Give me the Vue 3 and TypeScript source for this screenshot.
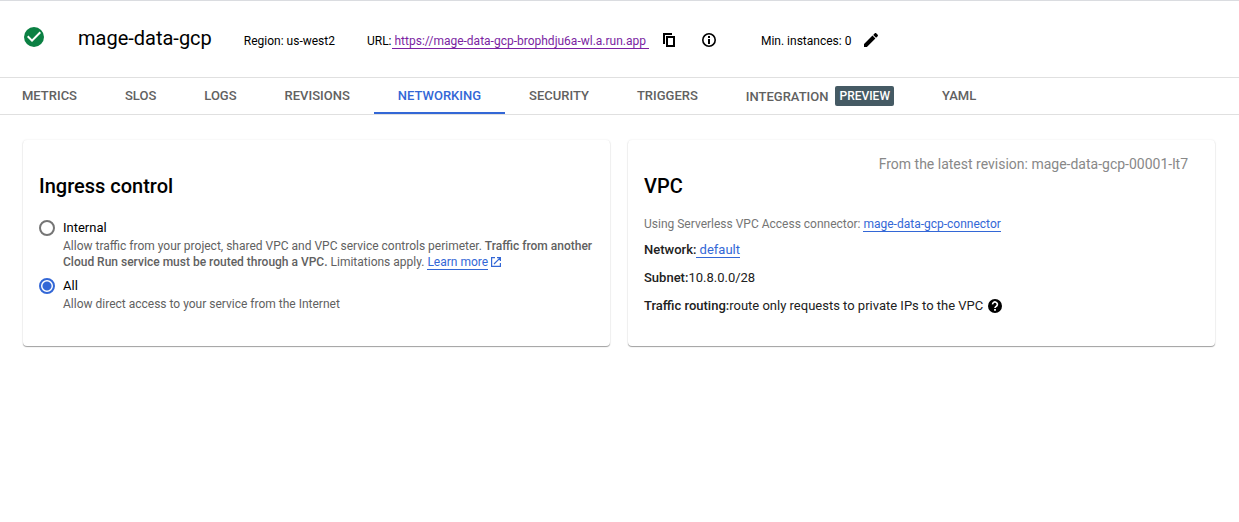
<script setup lang="ts">
import { ref } from 'vue'

interface Tab {
  label: string
  badge?: string
}

const tabs: Tab[] = [
  { label: 'METRICS' },
  { label: 'SLOS' },
  { label: 'LOGS' },
  { label: 'REVISIONS' },
  { label: 'NETWORKING' },
  { label: 'SECURITY' },
  { label: 'TRIGGERS' },
  { label: 'INTEGRATION', badge: 'PREVIEW' },
  { label: 'YAML' },
]

const activeTab = ref('NETWORKING')
const ingress = ref('all')
</script>

<template>
  <div class="page">
    <header class="service">
      <svg class="status" viewBox="0 0 24 24" role="img" aria-label="Healthy">
        <path fill="#0b8043" d="M12 2a10 10 0 1 0 0 20 10 10 0 0 0 0-20z" />
        <path fill="#fff" d="M10 17l-5-5 1.41-1.41L10 14.17l7.59-7.59L19 8z" />
      </svg>
      <h1>mage-data-gcp</h1>
      <span class="region">Region: us-west2</span>
      <span class="url">URL:<a href="#" class="visited">&nbsp;https://mage-data-gcp-brophdju6a-wl.a.run.app&nbsp;</a></span>
      <button type="button" class="icon-button copy" aria-label="Copy URL">
        <svg viewBox="0 0 18 18">
          <path fill="none" stroke="currentColor" stroke-width="2" d="M4 13V3h8M7 6h7v9H7z" />
        </svg>
      </button>
      <button type="button" class="icon-button info" aria-label="URL information">
        <svg viewBox="0 0 18 18">
          <circle cx="9" cy="9" r="6.2" fill="none" stroke="currentColor" stroke-width="1.6" />
          <path fill="currentColor" d="M8 8h2v5H8zM8 5h2v2H8z" />
        </svg>
      </button>
      <span class="instances">Min. instances: 0</span>
      <button type="button" class="icon-button edit" aria-label="Edit minimum instances">
        <svg viewBox="0 0 18 18">
          <path fill="currentColor" d="M2 13.1V16h2.9l8.5-8.500L10.500 4.600zM15.700 5.200c.4-.4.4-1 0-1.400l-1.500-1.500c-.4-.4-1-.4-1.400 0L11.200 3.900l2.900 2.900z" />
        </svg>
      </button>
    </header>

    <nav class="tabs" aria-label="Service sections">
      <button
        v-for="tab in tabs"
        :key="tab.label"
        type="button"
        class="tab"
        :class="{ active: tab.label === activeTab, badged: tab.badge }"
        @click="activeTab = tab.label"
      >
        {{ tab.label }}<span v-if="tab.badge" class="badge">{{ tab.badge }}</span>
      </button>
    </nav>

    <main class="cards">
      <section class="card">
        <h2>Ingress control</h2>
        <div class="option">
          <input id="internal" v-model="ingress" type="radio" name="ingress" value="internal" />
          <div>
            <label for="internal">Internal</label>
            <p>
              Allow traffic from your project, shared VPC and VPC service controls perimeter.
              <b>Traffic from another Cloud Run service must be routed through a VPC.</b>
              Limitations apply.
              <a href="#" class="link">Learn more</a>
              <svg class="external" viewBox="0 0 12 12" aria-hidden="true">
                <path fill="none" stroke="currentColor" stroke-width="1.2" d="M5 1.6H1.6v8.8h8.8V7M7 1.6h3.4V5M10.2 1.8L4 8" />
              </svg>
            </p>
          </div>
        </div>
        <div class="option">
          <input id="all" v-model="ingress" type="radio" name="ingress" value="all" />
          <div>
            <label for="all">All</label>
            <p>Allow direct access to your service from the Internet</p>
          </div>
        </div>
      </section>

      <section class="card vpc">
        <p class="revision">From the latest revision: mage-data-gcp-00001-lt7</p>
        <h2>VPC</h2>
        <p class="connector">Using Serverless VPC Access connector: <a href="#" class="link">mage-data-gcp-connector</a></p>
        <p class="row"><b>Network:</b><a href="#" class="link">&nbsp;default</a></p>
        <p class="row"><b>Subnet:</b>10.8.0.0/28</p>
        <p class="row">
          <b>Traffic routing:</b>route only requests to private IPs to the VPC
          <button type="button" class="help" aria-label="Traffic routing help">
            <svg viewBox="0 0 14 14">
              <circle cx="7" cy="7" r="7" fill="#000" />
              <path fill="none" stroke="#fff" stroke-width="1.7" d="M4.600 5.400a2.400 2.300 0 1 1 4 1.600c-.9.7-1.600 1-1.600 2" />
              <path fill="#fff" d="M6.1 10h1.8v1.700H6.100z" />
            </svg>
          </button>
        </p>
      </section>
    </main>
  </div>
</template>

<style>
body {
  background: #fff;
}
</style>

<style scoped>
.page {
  font-family: Roboto, "Noto Sans", sans-serif;
  font-size: 12px;
  color: #000;
  border-top: 1px solid #dadce0;
}

h1,
h2,
p {
  margin: 0;
}

b {
  font-weight: 500;
}

button {
  font: inherit;
  border: 0;
  background: none;
  padding: 0;
  cursor: pointer;
}

a {
  text-decoration: none;
}

svg {
  display: block;
}

.service {
  display: flex;
  align-items: center;
  height: 76px;
  padding-left: 22px;
  white-space: nowrap;
  border-bottom: 1px solid #e0e0e0;
}

.status {
  width: 24px;
  height: 24px;
  margin-bottom: 4px;
}

h1 {
  font-size: 20px;
  line-height: 24px;
  font-weight: 400;
  margin-left: 32px;
  margin-bottom: 2px;
}

.region,
.url,
.instances {
  line-height: 16px;
  margin-top: 4px;
  margin-left: 32px;
}

.visited {
  color: #7b1fa2;
  border-bottom: 1px solid #7b1fa2;
}

.icon-button {
  color: #000;
  margin-top: 2px;
}

.icon-button svg {
  width: 18px;
  height: 18px;
}

.copy {
  margin-left: 11px;
}

.info {
  margin-left: 22px;
}

.instances {
  margin-left: 43px;
}

.edit {
  margin-left: 11px;
}

.tabs {
  display: flex;
  height: 36px;
  margin-left: -2px;
  border-bottom: 1px solid #e0e0e0;
}

.tab {
  display: flex;
  align-items: center;
  padding: 0 24px;
  font-size: 13px;
  font-weight: 500;
  color: #616161;
  white-space: nowrap;
  border-bottom: 2px solid transparent;
}

.tab.badged {
  padding-top: 2px;
}

.tab.active {
  color: #3367d6;
  border-bottom-color: #3367d6;
}

.badge {
  margin-left: 7px;
  padding: 0 4px;
  font-size: 12px;
  line-height: 20px;
  color: #fff;
  background: #455a64;
  border-radius: 2px;
}

.cards {
  display: grid;
  grid-template-columns: 1fr 1fr;
  gap: 18px;
  padding: 25px 24px 24px 23px;
}

.card {
  padding: 34px 16px 30px;
  border-radius: 4px;
  box-shadow: 0 1px 1px rgba(0, 0, 0, 0.36), 0 0 2px rgba(0, 0, 0, 0.1);
}

h2 {
  font-size: 20px;
  line-height: 24px;
  font-weight: 500;
  margin-bottom: 20px;
}

.option {
  display: flex;
  gap: 8px;
}

.option + .option {
  margin-top: 6px;
}

.option input {
  appearance: none;
  flex: none;
  width: 16px;
  height: 16px;
  margin: 2px 0;
  border: 2px solid #757575;
  border-radius: 50%;
}

.option input:checked {
  border-color: #3367d6;
  background: radial-gradient(circle, #3367d6 4px, transparent 5px);
}

.option label {
  display: block;
  font-size: 13px;
  line-height: 20px;
}

.option p {
  line-height: 16px;
  color: #616161;
}

.link {
  color: #3367d6;
  border-bottom: 1px solid #3367d6;
}

.external {
  display: inline-block;
  width: 12px;
  height: 12px;
  margin-left: 2px;
  vertical-align: -2px;
  color: #3367d6;
}

.vpc {
  padding-top: 14px;
}

.vpc h2 {
  margin-bottom: 18px;
}

.revision {
  font-size: 14px;
  line-height: 20px;
  color: #888;
  text-align: right;
  padding-right: 11px;
}

.connector {
  line-height: 16px;
  color: #757575;
  margin-bottom: 8px;
}

.row {
  display: flex;
  align-items: center;
  font-size: 13px;
  line-height: 20px;
  color: #212121;
}

.row + .row {
  margin-top: 8px;
}

.row .link {
  line-height: 14px;
}

.help {
  margin-left: 5px;
}

.help svg {
  width: 14px;
  height: 14px;
}
</style>
